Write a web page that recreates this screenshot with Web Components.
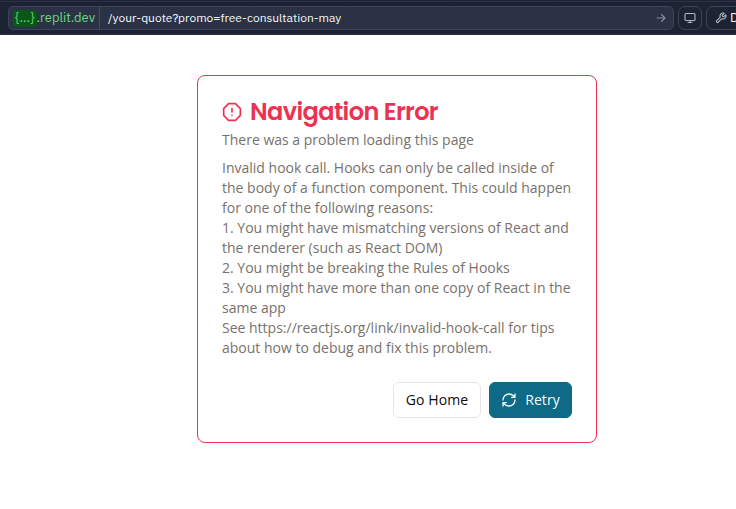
<!DOCTYPE html>
<html lang="en">
<head>
<meta charset="utf-8">
<title>Navigation Error</title>
<style>
html,body{margin:0;height:100%;background:#fff;overflow:hidden}
body{font-family:"Open Sans","Noto Sans",sans-serif;font-size:14px;display:flex;flex-direction:column}
error-card{margin:40px auto 0 197px}
</style>
</head>
<body>
<address-bar>
  <span slot="host"><repl-token>{...}</repl-token>.replit.dev</span>
  <span slot="path">/your-quote?promo=free-consultation-may</span>
  <span slot="tools">D</span>
</address-bar>
<error-card>
  <span slot="title">Navigation Error</span>
  <span slot="description">There was a problem loading this page</span>
  <span slot="message">Invalid hook call. Hooks can only be called inside of
the body of a function component. This could happen
for one of the following reasons:
1. You might have mismatching versions of React and
the renderer (such as React DOM)
2. You might be breaking the Rules of Hooks
3. You might have more than one copy of React in the
same app
See https://reactjs.org/link/invalid-hook-call for tips
about how to debug and fix this problem.</span>
  <action-button slot="actions">Go Home</action-button>
  <action-button slot="actions" primary>Retry</action-button>
</error-card>
<script>
const define = (name, html) => customElements.define(name, class extends HTMLElement {
  constructor() {
    super();
    const t = document.createElement('template');
    t.innerHTML = html;
    this.attachShadow({mode: 'open'}).append(t.content.cloneNode(true));
  }
});

define('repl-token', `<style>
:host{display:inline-block;background:#0a5617;border-radius:4px;height:17px;line-height:16px;padding:0 2px}
</style><slot></slot>`);

define('address-bar', `<style>
:host{display:flex;flex-direction:column;box-sizing:border-box;height:35px;background:#1c2333;overflow:hidden;font:400 12px/22px "IBM Plex Sans",Roboto,sans-serif;color:#f5f9fc;white-space:nowrap;border-bottom:1px solid #2b3245}
.tabs{display:grid;grid-template-columns:18px 132px 102px 97px 102px 102px 96px 87px;height:1px;border-bottom:1px solid #2b3245;margin-bottom:4px}
.tabs i{border-right:1px solid #2b3245}
.row{display:flex;gap:4px;padding-left:8px}
.url,.btn{box-sizing:border-box;height:24px;border:1px solid #3c445c;border-radius:5px;display:flex;align-items:center}
.url{width:666px;background:#2b3245;flex:none}
.host{width:91px;box-sizing:border-box;padding-left:4px;border-right:1px solid #434b61;color:#6cd97e;height:22px;font-size:13px}
.path{padding-left:8px;flex:1}
.btn{width:24px;justify-content:center;border-radius:7px;flex:none}
.wide{width:60px;justify-content:flex-start;padding-left:8px;gap:3px;font-size:13px}
svg{fill:none;stroke:#b0b6c4;stroke-width:1.1;stroke-linecap:round;stroke-linejoin:round;flex:none}
</style>
<div class="tabs"><i></i><i></i><i></i><i></i><i></i><i></i><i></i><i></i></div>
<div class="row">
<div class="url"><div class="host"><slot name="host"></slot></div><div class="path"><slot name="path"></slot></div>
<svg width="12" height="12" viewBox="0 0 12 12" style="margin-right:6px;stroke:#858da0"><path d="M2 6h8M6.5 2.5 10 6 6.5 9.5"/></svg></div>
<div class="btn"><svg width="12" height="12" viewBox="0 0 12 12"><rect x="1" y="1.5" width="10" height="7" rx="1"/><path d="M6 8.5v2M4 10.5h4"/></svg></div>
<div class="btn wide"><svg width="12" height="12" viewBox="0 0 24 24" style="stroke-width:2.2"><path d="M14.7 6.3a1 1 0 0 0 0 1.4l1.6 1.6a1 1 0 0 0 1.4 0l3.77-3.77a6 6 0 0 1-7.94 7.94l-6.91 6.91a2.12 2.12 0 0 1-3-3l6.91-6.91a6 6 0 0 1 7.94-7.94z"/></svg><slot name="tools"></slot></div>
</div>`);

define('error-card', `<style>
:host{display:block;box-sizing:border-box;width:400px;height:368px;padding:24px;border:1px solid #ee3150;border-radius:8px;background:#fff;color:#78716c;line-height:20px}
h1{margin:0 0 6px;height:24px;display:flex;align-items:center;gap:8px;color:#ee3150;font:600 24px/24px Poppins,Inter,sans-serif;letter-spacing:-.6px;white-space:nowrap}
svg{fill:none;stroke:currentColor;stroke-width:2;stroke-linecap:round;stroke-linejoin:round;flex:none}
.msg{margin-top:8px;white-space:pre}
.actions{display:flex;justify-content:flex-end;gap:8px;margin-top:24px}
</style>
<h1><svg width="20" height="20" viewBox="0 0 24 24"><path d="M7.86 2h8.28L22 7.86v8.28L16.14 22H7.86L2 16.14V7.86zM12 8v4M12 16h.01"/></svg><slot name="title"></slot></h1>
<div><slot name="description"></slot></div>
<div class="msg"><slot name="message"></slot></div>
<div class="actions"><slot name="actions"></slot></div>`);

define('action-button', `<style>
:host{display:flex;align-items:center;justify-content:center;box-sizing:border-box;width:88px;height:36px;border:1px solid #e5e5e5;border-radius:6px;color:#0c0a09;background:#fff;font-weight:500;letter-spacing:.08px;white-space:nowrap}
:host([primary]){width:83px;background:#0e6a87;border-color:#0e6a87;color:#f3fafc;gap:8px}
svg{display:none;fill:none;stroke:currentColor;stroke-width:2;stroke-linecap:round;stroke-linejoin:round}
:host([primary]) svg{display:block}
</style>
<svg width="16" height="16" viewBox="0 0 24 24"><path d="M3 12a9 9 0 0 1 9-9 9.75 9.75 0 0 1 6.74 2.74L21 8M21 3v5h-5M21 12a9 9 0 0 1-9 9 9.75 9.75 0 0 1-6.74-2.74L3 16M8 16H3v5"/></svg><slot></slot>`);
</script>
</body>
</html>
